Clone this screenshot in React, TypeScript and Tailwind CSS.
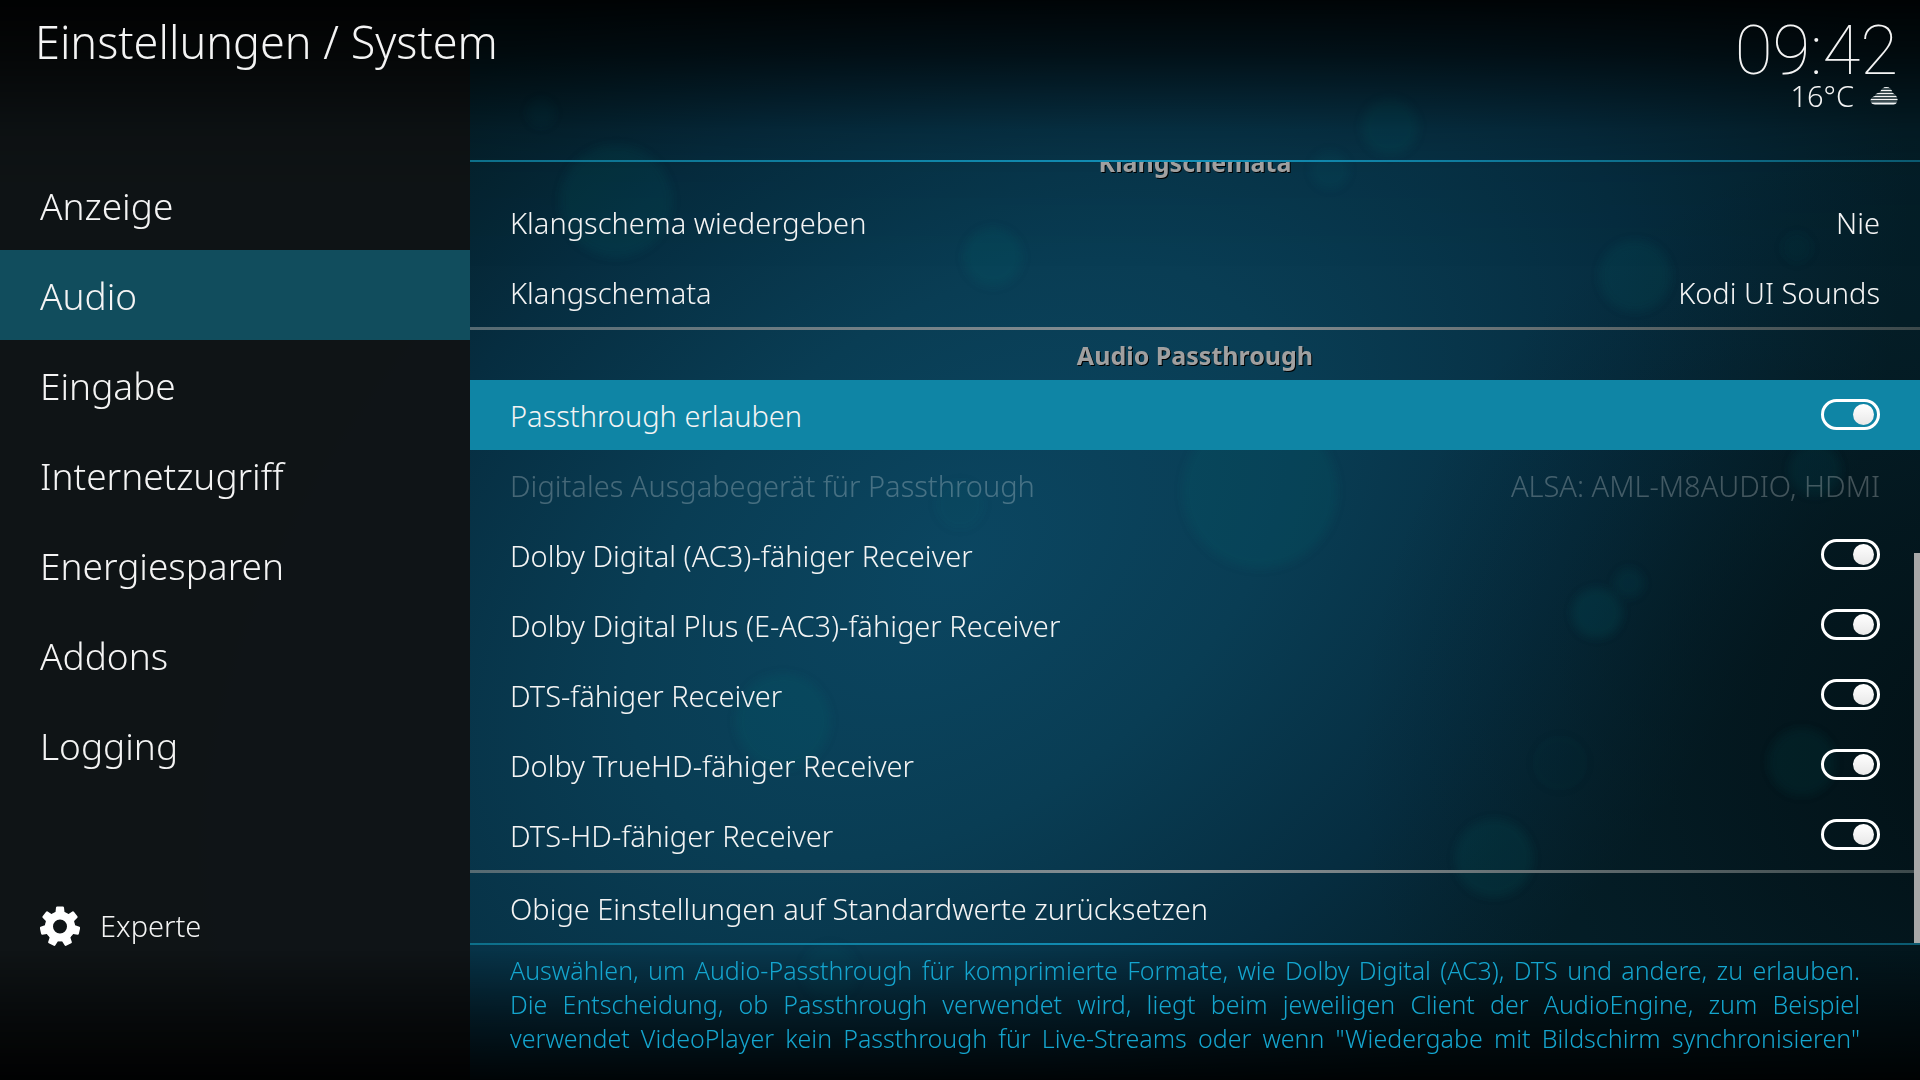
import React, { useState } from 'react';

const sidebarItems = ['Anzeige', 'Audio', 'Eingabe', 'Internetzugriff', 'Energiesparen', 'Addons', 'Logging'];

const receivers = [
  'Dolby Digital (AC3)-fähiger Receiver',
  'Dolby Digital Plus (E-AC3)-fähiger Receiver',
  'DTS-fähiger Receiver',
  'Dolby TrueHD-fähiger Receiver',
  'DTS-HD-fähiger Receiver',
];

// soft light spots of the backdrop: x, y, radius, opacity
const spots = [
  [616, 201, 56, 0.14],
  [541, 113, 14, 0.1],
  [1390, 127, 28, 0.18],
  [1330, 170, 19, 0.12],
  [993, 257, 29, 0.2],
  [1635, 276, 36, 0.14],
  [1797, 248, 16, 0.05],
  [1260, 491, 77, 0.2],
  [960, 505, 24, 0.08],
  [1597, 613, 25, 0.18],
  [1629, 583, 15, 0.12],
  [783, 721, 47, 0.18],
  [1815, 470, 26, 0.12],
  [1494, 858, 39, 0.15],
  [1560, 763, 28, 0.03],
  [1802, 762, 34, 0.11],
  [830, 972, 28, 0.1],
];

const Backdrop: React.FC = () => (
  <svg className="absolute inset-0 h-full w-full" viewBox="0 0 1920 1080" preserveAspectRatio="none" aria-hidden="true">
    <defs>
      <radialGradient id="glow" gradientUnits="userSpaceOnUse" cx="0" cy="0" r="1" gradientTransform="translate(960 560) rotate(-38) scale(1080 680)">
        <stop offset="0" stopColor="#0b4661" />
        <stop offset="0.35" stopColor="#093d54" />
        <stop offset="0.7" stopColor="#062d40" />
        <stop offset="1" stopColor="#041f29" />
      </radialGradient>
      <radialGradient id="corner" gradientUnits="userSpaceOnUse" cx="0" cy="0" r="1" gradientTransform="translate(2000 760) scale(640 640)">
        <stop offset="0" stopColor="#020f13" stopOpacity="0.95" />
        <stop offset="0.4" stopColor="#03141a" stopOpacity="0.7" />
        <stop offset="0.7" stopColor="#04181f" stopOpacity="0.3" />
        <stop offset="1" stopColor="#041a22" stopOpacity="0" />
      </radialGradient>
      <linearGradient id="fade" x1="0" y1="0" x2="0" y2="1">
        <stop offset="0" stopColor="#000" stopOpacity="0.9" />
        <stop offset="0.05" stopColor="#000" stopOpacity="0.65" />
        <stop offset="0.12" stopColor="#000" stopOpacity="0.15" />
        <stop offset="0.16" stopColor="#000" stopOpacity="0.05" />
        <stop offset="0.25" stopColor="#000" stopOpacity="0" />
        <stop offset="0.88" stopColor="#000" stopOpacity="0" />
        <stop offset="0.94" stopColor="#000" stopOpacity="0.5" />
        <stop offset="1" stopColor="#000" stopOpacity="0.9" />
      </linearGradient>
      <filter id="soft">
        <feGaussianBlur stdDeviation="4" />
      </filter>
    </defs>
    <rect width="1920" height="1080" fill="url(#glow)" />
    <rect width="1920" height="1080" fill="url(#corner)" />
    <g fill="#0c6468" filter="url(#soft)">
      {spots.map(([x, y, r, o]) => (
        <circle key={`${x}-${y}`} cx={x} cy={y} r={r} opacity={o} />
      ))}
    </g>
    <rect width="470" height="1080" fill="#0f1416" opacity="0.97" />
    <rect width="1920" height="1080" fill="url(#fade)" />
  </svg>
);

const CloudIcon: React.FC = () => (
  <svg className="h-5 w-7" viewBox="0 0 28 20" aria-hidden="true">
    <clipPath id="cloud">
      <path d="M5 19Q1 18 .5 14.500 1 11 5 10q.5-3 5-3.500Q12 1 16.500 1q5 .5 6 6 4 1.500 5 6.500Q27 18 23.500 19z" />
    </clipPath>
    <g clipPath="url(#cloud)">
      <path d="M0 0h28v20H0z" fill="#a5b2b5" opacity="0.75" />
      <path d="M0 3h28M0 6h28M0 9h28" stroke="#04191c" strokeWidth="1" />
      <path d="M0 12h28M0 15h28" stroke="#04191c" strokeWidth="1" />
      <path d="M0 1.500h28M0 4.500h28M0 7.500h28M0 10.500h28M0 13.500h28M0 17.500h28" stroke="#f4f4f4" strokeWidth="1" />
    </g>
  </svg>
);

// seven-toothed gear
const GearIcon: React.FC = () => {
  const teeth = Array.from({ length: 7 }, (_, i) => (i * 360) / 7);

  return (
    <svg className="h-10 w-10" viewBox="0 0 40 40" aria-hidden="true">
      <circle cx="20" cy="20.500" r="11" fill="none" stroke="#fff" strokeWidth="8" />
      {teeth.map((angle) => (
        <path
          key={angle}
          d="M13.500 8 15.500 6 16 1.500Q16.200.5 17.200.5h5.600Q23.800.5 24 1.500L24.500 6l2 2z"
          fill="#fff"
          transform={`rotate(${angle} 20 20.500)`}
        />
      ))}
    </svg>
  );
};

interface SwitchProps {
  label: string;
  active?: boolean;
}

const SwitchRow: React.FC<SwitchProps> = ({ label, active }) => {
  const [checked, setChecked] = useState(true);

  return (
    <label
      className={`relative flex h-[70px] shrink-0 cursor-pointer items-center justify-between px-10 ${active ? 'bg-[#0f85a5]' : ''}`}
    >
      <span className="pt-0.5">{label}</span>
      <input type="checkbox" role="switch" className="sr-only" checked={checked} onChange={(e) => setChecked(e.target.checked)} />
      <span
        className={`mb-0.5 flex h-[31px] w-[59px] items-center rounded-full border-[3px] border-white px-[3px] ${
          checked ? 'justify-end' : 'justify-start'
        }`}
      >
        <span className="h-[21px] w-[21px] rounded-full bg-linear-to-b from-white to-[#e8e8e8]" />
      </span>
    </label>
  );
};

interface ValueProps {
  label: string;
  value?: string;
  disabled?: boolean;
}

const ValueRow: React.FC<ValueProps> = ({ label, value, disabled }) => (
  <button
    type="button"
    disabled={disabled}
    className="flex h-[70px] w-full shrink-0 items-center justify-between px-10 pt-0.5 text-left disabled:text-white/25"
  >
    <span>{label}</span>
    <span>{value}</span>
  </button>
);

const GroupTitle: React.FC<{ children: string }> = ({ children }) => (
  <h2 className="flex h-[50px] shrink-0 items-center justify-center pt-0.5 text-[25px] font-bold text-[#a0a0a0] [text-shadow:1px_1px_0_#000]">
    {children}
  </h2>
);

const Divider: React.FC = () => (
  <hr className="h-[3px] shrink-0 border-0 bg-linear-to-r from-[#566a72] via-[#8a9296] via-50% to-[#3c494b]" />
);

const BlueLine: React.FC = () => (
  <hr className="h-0.5 shrink-0 border-0 bg-linear-to-r from-[#0d6f8a] via-[#1290b8] via-50% to-[#0b5a70]" />
);

const App: React.FC = () => {
  const [section, setSection] = useState('Audio');

  return (
    <div className="relative h-screen overflow-hidden bg-black font-['Noto_Sans',sans-serif] font-light text-[#f4f4f4]">
      <Backdrop />
      <div className="relative flex h-full flex-col">
        <header className="flex h-40 shrink-0 items-start justify-between pt-[18px] pr-[22px] pl-[35px]">
          <h1 className="text-[45px] leading-12">Einstellungen / System</h1>
          <div className="flex flex-col items-end">
            <time className="font-['Roboto',sans-serif] text-[69px] leading-[66px] font-thin">09:42</time>
            <div className="flex items-center gap-4 text-[29px] leading-6">
              <span>16°C</span>
              <CloudIcon />
            </div>
          </div>
        </header>

        <div className="flex min-h-0 flex-1">
          <aside className="flex w-[470px] shrink-0 flex-col justify-between pb-[134px]">
            <nav>
              {sidebarItems.map((item) => (
                <button
                  key={item}
                  type="button"
                  onClick={() => setSection(item)}
                  className={`flex h-[90px] w-full items-center px-10 pt-0.5 text-left text-[37px] ${
                    item === section ? 'bg-[#114d5d]' : ''
                  }`}
                >
                  {item}
                </button>
              ))}
            </nav>
            <button type="button" className="flex items-center gap-5 px-10 text-[29px] leading-10">
              <GearIcon />
              Experte
            </button>
          </aside>

          <main className="flex min-w-0 flex-1 flex-col">
            <BlueLine />
            <div className="relative flex min-h-0 flex-1 flex-col justify-end overflow-hidden text-[29px]">
              <GroupTitle>Klangschemata</GroupTitle>
              <ValueRow label="Klangschema wiedergeben" value="Nie" />
              <ValueRow label="Klangschemata" value="Kodi UI Sounds" />
              <Divider />
              <GroupTitle>Audio Passthrough</GroupTitle>
              <SwitchRow label="Passthrough erlauben" active />
              <ValueRow label="Digitales Ausgabegerät für Passthrough" value="ALSA: AML-M8AUDIO, HDMI" disabled />
              {receivers.map((label) => (
                <SwitchRow key={label} label={label} />
              ))}
              <Divider />
              <ValueRow label="Obige Einstellungen auf Standardwerte zurücksetzen" />
              <div className="absolute right-0 bottom-0 h-1/2 w-1.5 bg-[#a8a8a8]" />
            </div>
            <BlueLine />
            <p className="h-[135px] shrink-0 overflow-hidden pt-2 pr-[60px] pl-10 text-justify text-[25px] leading-[34px] text-[#14a5ce] [text-align-last:justify]">
              Auswählen, um Audio-Passthrough für komprimierte Formate, wie Dolby Digital (AC3), DTS und andere, zu erlauben.
              Die Entscheidung, ob Passthrough verwendet wird, liegt beim jeweiligen Client der AudioEngine, zum Beispiel
              verwendet VideoPlayer kein Passthrough für Live-Streams oder wenn "Wiedergabe mit Bildschirm synchronisieren"
            </p>
          </main>
        </div>
      </div>
    </div>
  );
};

export default App;
